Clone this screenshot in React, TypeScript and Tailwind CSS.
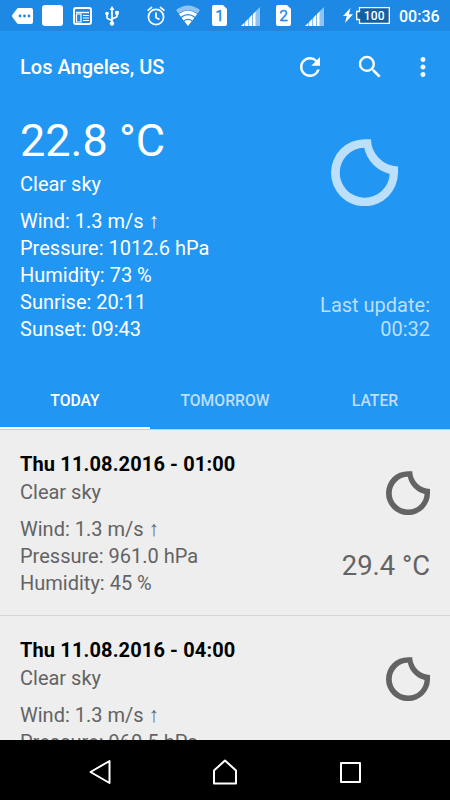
import { MdMoreVert, MdRefresh, MdSearch } from "react-icons/md"

const tabs = ["TODAY", "TOMORROW", "LATER"]

const forecast = [
  {
    date: "Thu 11.08.2016 - 01:00",
    description: "Clear sky",
    wind: "1.3 m/s",
    pressure: "961.0 hPa",
    humidity: "45 %",
    temperature: "29.4 °C",
  },
  {
    date: "Thu 11.08.2016 - 04:00",
    description: "Clear sky",
    wind: "1.3 m/s",
    pressure: "960.5 hPa",
  },
]

function Moon({ className }: { className: string }) {
  return (
    <svg viewBox="0 0 67 67" className={className} fill="currentColor" fillRule="evenodd">
      <path d="M40 .2H33.5A33.5 33.5 0 1 0 67 33.7V27.4A27.5 27.5 0 0 1 40 .2ZM33.2 8.7A25 25 0 1 0 58.7 34.9A34.5 34.5 0 0 1 33.2 8.7Z" />
    </svg>
  )
}

function Wind({ value }: { value: string }) {
  return (
    <p>
      Wind: {value} <span className="font-['Liberation_Sans',sans-serif] text-[21px] leading-none">↑</span>
    </p>
  )
}

function SimCard({ slot, className }: { slot: string; className: string }) {
  return (
    <svg viewBox="0 0 15 21" className={`h-[21px] w-[15px] shrink-0 ${className}`}>
      <path d="M2 0H11L15 4V19a2 2 0 0 1-2 2H2a2 2 0 0 1-2-2V2a2 2 0 0 1 2-2Z" fill="#fff" />
      <text x="7.5" y="16" textAnchor="middle" fontSize="15.5" fill="#1E88E5" stroke="#1E88E5" strokeWidth=".3">
        {slot}
      </text>
    </svg>
  )
}

function Signal({ className }: { className: string }) {
  return (
    <svg viewBox="0 0 19 19" className={`h-[19px] w-[19px] shrink-0 ${className}`} fill="#fff">
      <path d="M0 19L3.5 15.500V19ZM4.100 14.900L7.500 11.500V19H4.100ZM8.100 10.900L11.400 7.600V19H8.100Z" />
      <path d="M12 7L14.700 4.300V19H12Z" />
      <path d="M14.700 4.300L19 0V19H14.700Z" opacity=".5" />
    </svg>
  )
}

function StatusBar() {
  return (
    <div className="flex h-[31px] shrink-0 items-center bg-[#1E88E5] pl-3 text-white">
      {/* Notifications */}
      <svg viewBox="0 0 21 16" className="h-4 w-[21px] shrink-0">
        <path d="M6.5 0H19a2 2 0 0 1 2 2V14a2 2 0 0 1-2 2H6.5Q5.5 16 4.8 15L.5 9.2Q-.3 8 .5 6.8L4.800 1Q5.500 0 6.500 0Z" fill="#fff" />
        <g fill="#1E88E5">
          <circle cx="8" cy="8" r="1.400" />
          <circle cx="12.500" cy="8" r="1.400" />
          <circle cx="17" cy="8" r="1.400" />
        </g>
      </svg>
      <div className="ml-[9px] size-[21px] shrink-0 rounded-[3px] bg-white" />
      <svg viewBox="0 0 19 18" className="ml-2.5 h-[18px] w-[19px] shrink-0">
        <rect x="1" y="1" width="17" height="16" rx="2" fill="none" stroke="#fff" strokeWidth="2" />
        <path d="M3 5.500H16" stroke="#fff" strokeWidth="1.400" />
        <path d="M3.500 7H8V15H3.500Z" fill="#1E88E5" stroke="#fff" strokeWidth="1.200" />
        <path d="M10 8.500H16M10 11H16M10 13.500H16" stroke="#fff" strokeWidth="1.200" />
      </svg>
      <svg viewBox="0 0 14 20" className="ml-[13px] h-5 w-3.5 shrink-0" fill="none" stroke="#fff" strokeWidth="1.700">
        <path d="M7 2V17M7 14.500L2.500 12.500Q2 12 2 11V8M7 13L11.500 11Q12 10.500 12 9.500V7" />
        <path d="M7 0L9.500 4H4.500Z" fill="#fff" stroke="none" />
        <circle cx="7" cy="17.500" r="2.200" fill="#fff" stroke="none" />
        <circle cx="2" cy="7.500" r="1.800" fill="#fff" stroke="none" />
        <path d="M10.200 5H13.800V8.600H10.200Z" fill="#fff" stroke="none" />
      </svg>

      {/* System icons */}
      <svg viewBox="0 0 18 20" className="ml-[28px] h-5 w-[18px] shrink-0" fill="none" stroke="#fff" strokeWidth="1.700">
        <circle cx="9" cy="11" r="7.600" />
        <path d="M9 6.500V11.500L12.500 13.500M.6 4.600L5 1M17.400 4.600L13 1" />
      </svg>
      <svg viewBox="0 0 24 21" className="ml-[11px] h-[21px] w-6 shrink-0" fill="#fff">
        <path d="M0 5Q12-4 24 5L21.500 8.500Q12 1.500 2.500 8.500Z" opacity=".5" />
        <path d="M2.900 9Q12 2 21.100 9L19.200 11.700Q12 6.300 4.800 11.700Z" />
        <path d="M5.600 12.700Q12 8 18.400 12.700L16.500 15.400Q12 12 7.500 15.400Z" />
        <path d="M8.300 16.200Q12 13.600 15.700 16.200L12 21Z" />
      </svg>
      <SimCard slot="1" className="ml-3" />
      <Signal className="ml-3.5 mt-0.5" />
      <SimCard slot="2" className="ml-4" />
      <Signal className="ml-3.5 mt-0.5" />
      <svg viewBox="0 0 10 15" className="ml-[19px] h-[15px] w-2.5 shrink-0" fill="#fff">
        <path d="M7.500 0L0 8H3.800L2 15L10 6.300H5.900Z" />
      </svg>
      <svg viewBox="0 0 34 17" className="ml-[3px] h-[17px] w-[34px] shrink-0">
        <path d="M3.500 .7H33.300V16.300H3.500V12.500H.7V4.500H3.500Z" fill="#155FA0" stroke="#fff" strokeWidth="1.300" />
        <text x="18.300" y="12.800" textAnchor="middle" fontSize="12" fontWeight="500" fill="#fff" letterSpacing=".2">
          100
        </text>
      </svg>
      <span className="mt-0.5 ml-[9px] text-base leading-none font-medium">00:36</span>
    </div>
  )
}

function CurrentWeather() {
  return (
    <section className="flex h-[268px] shrink-0 justify-between px-5 pt-3 text-white">
      <div className="text-xl leading-[27px]">
        <h1 className="text-[45px] leading-[54px]">22.8 °C</h1>
        <p className="mt-[3px]">Clear sky</p>
        <div className="mt-2.5">
          <Wind value="1.3 m/s" />
          <p>Pressure: 1012.6 hPa</p>
          <p>Humidity: 73 %</p>
          <p>Sunrise: 20:11</p>
          <p>Sunset: 09:43</p>
        </div>
      </div>
      <div className="flex flex-col items-end text-[#BCDFFB]">
        <Moon className="mt-[25px] mr-8 size-[67px]" />
        <p className="mt-[87px] text-right text-xl leading-6">
          Last update:
          <br />
          00:32
        </p>
      </div>
    </section>
  )
}

function ForecastItem({ item }: { item: (typeof forecast)[number] }) {
  return (
    <li className="flex h-[186px] shrink-0 justify-between border-b border-[#D6D6D6] px-5 pt-[21px] text-xl leading-[27px] text-[#636363]">
      <div>
        <h2 className="font-bold tracking-[0.13px] text-black">{item.date}</h2>
        <p className="mt-px">{item.description}</p>
        <div className="mt-2.5">
          <Wind value={item.wind} />
          <p>Pressure: {item.pressure}</p>
          {item.humidity && <p>Humidity: {item.humidity}</p>}
        </div>
      </div>
      <div className="flex flex-col items-end">
        <Moon className="mt-5 size-11" />
        {item.temperature && <p className="mt-[35px] text-[27.4px] leading-8">{item.temperature}</p>}
      </div>
    </li>
  )
}

export default function App() {
  return (
    <div className="flex h-[800px] w-[450px] flex-col overflow-hidden bg-[#2196F3] font-[Roboto,sans-serif]">
      <StatusBar />

      {/* Toolbar */}
      <header className="flex h-[71px] shrink-0 items-center pr-3 pl-5 text-white">
        <h1 className="flex-1 text-xl font-medium">Los Angeles, US</h1>
        <MdRefresh className="size-[30px]" />
        <MdSearch className="ml-[30px] size-[30px]" />
        <MdMoreVert className="ml-[23px] size-[30px]" />
      </header>

      <CurrentWeather />

      {/* Tabs */}
      <nav className="grid h-[60px] shrink-0 grid-cols-3 border-b border-[#C4CDD4]">
        {tabs.map((tab, index) => (
          <button
            key={tab}
            className={`border-b-2 pt-[5px] text-[15.7px] font-medium ${
              index === 0 ? "border-white text-white" : "border-transparent text-[#BCDFFB]"
            }`}
          >
            {tab}
          </button>
        ))}
      </nav>

      <ul className="flex min-h-0 flex-1 flex-col overflow-hidden bg-[#EEEEEE]">
        {forecast.map((item) => (
          <ForecastItem key={item.date} item={item} />
        ))}
      </ul>

      {/* Navigation bar */}
      <footer className="flex h-[60px] shrink-0 items-center bg-black pt-1">
        <svg viewBox="0 0 24 26" className="ml-[88px] h-[26px] w-6" fill="none" stroke="#fff" strokeWidth="2" strokeLinejoin="round">
          <path d="M21.500 2V24L2.500 13Z" />
        </svg>
        <svg viewBox="0 0 26 26" className="ml-[100px] size-[26px]" fill="none" stroke="#fff" strokeWidth="2" strokeLinejoin="round">
          <path d="M13 1.500L24 11.500V24.500H2V11.500Z" />
        </svg>
        <div className="ml-[102px] size-[21px] rounded-[1px] border-2 border-white" />
      </footer>
    </div>
  )
}
